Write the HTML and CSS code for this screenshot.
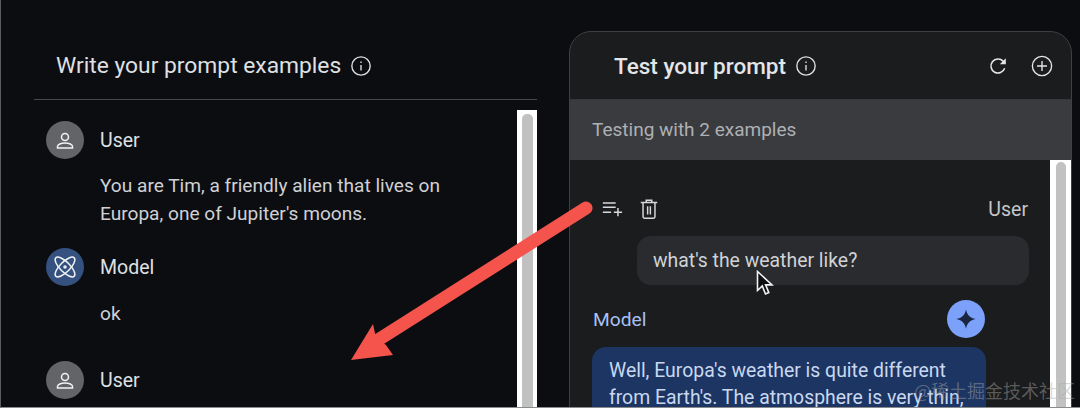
FILE: index.html
```html
<!DOCTYPE html>
<html lang="en">
<head>
  <meta charset="UTF-8">
  <meta name="viewport" content="width=device-width, initial-scale=1.0">
  <title>Prompt examples</title>
  <link rel="stylesheet" href="styles.css">
</head>
<body>
  <div class="screen">
    <!-- Left side: prompt examples -->
    <section class="examples">
      <header class="examples-header">
        <h2 class="examples-title">Write your prompt examples</h2>
        <svg class="icon-info" viewBox="0 0 24 24"><circle cx="12" cy="12" r="10"/><path d="M12 11v6M12 7v1.600"/></svg>
      </header>
      <div class="examples-body">
        <div class="messages">
          <div class="message">
            <div class="message-head">
              <span class="avatar avatar-user">
                <svg viewBox="0 0 24 24"><circle cx="12" cy="9" r="3.500"/><path d="M4.500 20v-1.500c0-2 3.500-3.500 7.500-3.500s7.500 1.500 7.500 3.500V20z"/></svg>
              </span>
              <span class="message-role">User</span>
            </div>
            <p class="message-text">You are Tim, a friendly alien that lives on<br>Europa, one of Jupiter's moons.</p>
          </div>
          <div class="message message-short">
            <div class="message-head">
              <span class="avatar avatar-model">
                <svg viewBox="0 0 24 24"><ellipse cx="12" cy="12" rx="13" ry="5" transform="rotate(45 12 12)"/><ellipse cx="12" cy="12" rx="13" ry="5" transform="rotate(-45 12 12)"/><circle cx="12" cy="12" r="1"/></svg>
              </span>
              <span class="message-role">Model</span>
            </div>
            <p class="message-text">ok</p>
          </div>
          <div class="message">
            <div class="message-head">
              <span class="avatar avatar-user">
                <svg viewBox="0 0 24 24"><circle cx="12" cy="9" r="3.500"/><path d="M4.500 20v-1.500c0-2 3.500-3.500 7.500-3.500s7.500 1.500 7.500 3.500V20z"/></svg>
              </span>
              <span class="message-role">User</span>
            </div>
          </div>
        </div>
        <div class="scrollbar"><div class="scrollbar-thumb"></div></div>
      </div>
    </section>

    <!-- Right side: test panel -->
    <section class="test-panel">
      <header class="test-header">
        <h2 class="test-title">Test your prompt</h2>
        <svg class="icon-info" viewBox="0 0 24 24"><circle cx="12" cy="12" r="10"/><path d="M12 11v6M12 7v1.600"/></svg>
        <div class="test-actions">
          <svg class="icon-refresh" viewBox="0 0 24 24"><path class="refresh-arc" d="M19.300 14.500a7.700 7.700 0 1 1-1.700-7.800L19.500 8.500"/><path class="refresh-tip" d="M20.500 3.500v6.500h-6.500z"/></svg>
          <svg class="icon-add" viewBox="0 0 24 24"><circle cx="12" cy="12" r="10.500"/><path d="M12 6.500v11M6.500 12h11"/></svg>
        </div>
      </header>
      <div class="test-status">Testing with 2 examples</div>
      <div class="test-body">
        <div class="test-chat">
          <div class="user-row">
            <svg class="icon-queue" viewBox="0 0 24 24"><path d="M2 5.500h14M2 10h14M2 15.500h9M14 15.500h9M18.500 11v9"/></svg>
            <svg class="icon-trash" viewBox="0 0 24 24"><path d="M3 5h18M9 5V2.500h6V5M5.500 5v15.500a1.500 1.500 0 0 0 1.500 1.500h10a1.500 1.500 0 0 0 1.500-1.500V5M10.500 9v9M13.500 9v9"/></svg>
            <span class="user-label">User</span>
          </div>
          <div class="user-bubble">what's the weather like?</div>
          <div class="model-row">
            <span class="model-label">Model</span>
            <span class="model-badge">
              <svg viewBox="0 0 24 24"><path d="M12 1.500c1.200 6 4.500 9.300 10.500 10.500-6 1.200-9.300 4.500-10.500 10.500-1.200-6-4.500-9.300-10.500-10.500 6-1.200 9.300-4.500 10.500-10.500z"/></svg>
            </span>
          </div>
          <div class="model-bubble">Well, Europa's weather is quite different from Earth's. The atmosphere is very thin,</div>
        </div>
        <div class="scrollbar scrollbar-test"><div class="scrollbar-thumb"></div></div>
      </div>
    </section>

    <!-- Annotation on top of the screenshot -->
    <svg class="arrow" viewBox="0 0 1080 408">
      <path class="arrow-shaft" d="M586 208L378 340"/>
      <path class="arrow-head" d="M351 360L373 324L376 338L386 345L393 355z"/>
    </svg>
    <svg class="cursor" viewBox="0 0 18 26"><path d="M1.500 1.500v19l4.800-4.500 3.200 8 3.300-1.400-3.200-7.700h6.400z"/></svg>
    <div class="watermark">@稀土掘金技术社区</div>
  </div>
</body>
</html>
```
FILE: styles.css
```css
/* Global Styles */
* {
  margin: 0;
  padding: 0;
  box-sizing: border-box;
}

body {
  font-family: Roboto, Arial, sans-serif;
  background-color: #0c0d11;
  color: #d8dade;
  overflow: hidden;
}

svg {
  display: block;
}

.screen {
  position: relative;
  display: flex;
  width: 1080px;
  height: 408px;
  overflow: hidden;
  border-left: 1px solid #5a5b5f;
  border-bottom: 1px solid #8a8b8e;
}

/* Left side */
.examples {
  width: 568px;
  flex-shrink: 0;
  padding: 0 32px 0 33px;
}

.examples-header {
  display: flex;
  align-items: center;
  gap: 9px;
  height: 100px;
  padding: 32px 0 0 22px;
  border-bottom: 1px solid #47484c;
}

.examples-title {
  font-size: 22.8px;
  font-weight: 400;
  color: #dfe0e3;
}

.icon-info {
  width: 22px;
  height: 22px;
  fill: none;
  stroke: #dfe0e3;
  stroke-width: 1.5;
}

.examples-body {
  display: flex;
  height: 298px;
  margin-top: 10px;
}

.messages {
  flex: 1;
  padding: 11px 0 0 12px;
}

.message {
  padding-bottom: 20px;
}

.message-short {
  padding-bottom: 33px;
}

.message-short .message-text {
  margin-top: 14px;
}

.message-head {
  display: flex;
  align-items: center;
  gap: 16px;
}

.avatar {
  display: flex;
  align-items: center;
  justify-content: center;
  width: 38px;
  height: 38px;
  border-radius: 50%;
}

.avatar svg {
  width: 24px;
  height: 24px;
  fill: none;
  stroke: #f1f2f4;
  stroke-width: 1.5;
}

.avatar-user {
  background-color: #636467;
}

.avatar-model {
  background-color: #34517f;
}

.message-role {
  font-size: 19.5px;
  color: #dfe0e3;
}

.message-text {
  margin: 13px 0 0 54px;
  font-size: 19.1px;
  line-height: 28px;
  color: #cfd1d5;
}

.scrollbar {
  width: 20px;
  flex-shrink: 0;
  padding: 4px 4px 0 5px;
  background-color: #fff;
}

.scrollbar-thumb {
  height: 100%;
  background-color: #c1c1c1;
  border-radius: 5px 5px 0 0;
}

/* Right side */
.test-panel {
  width: 503px;
  height: 420px;
  flex-shrink: 0;
  margin-top: 31px;
  background-color: #1b1c1e;
  border: 1px solid #3f4044;
  border-radius: 22px 22px 0 0;
  overflow: hidden;
}

.test-header {
  display: flex;
  align-items: center;
  gap: 9px;
  height: 68px;
  padding: 1px 18px 0 44px;
  border-bottom: 1px solid #36373a;
}

.test-title {
  font-size: 22.5px;
  font-weight: 500;
  color: #e4e5e8;
}

.test-actions {
  display: flex;
  align-items: center;
  gap: 22px;
  margin-left: auto;
}

.icon-refresh {
  width: 22px;
  height: 22px;
  fill: none;
}

.refresh-arc {
  stroke: #e4e5e8;
  stroke-width: 1.7;
}

.refresh-tip {
  fill: #e4e5e8;
}

.icon-add {
  width: 22px;
  height: 22px;
  fill: none;
  stroke: #e4e5e8;
  stroke-width: 1.5;
}

.test-status {
  display: flex;
  align-items: center;
  height: 60px;
  padding: 0 0 2px 22px;
  font-size: 19px;
  color: #aeb0b4;
  background-color: #3a3b3f;
}

.test-body {
  display: flex;
  height: 300px;
}

.test-chat {
  flex: 1;
  padding: 36px 22px 0 22px;
}

.user-row {
  display: flex;
  align-items: center;
  gap: 15px;
  height: 26px;
  padding-left: 9px;
}

.icon-queue {
  width: 22px;
  height: 22px;
  fill: none;
  stroke: #d8d9dc;
  stroke-width: 1.6;
}

.icon-trash {
  width: 22px;
  height: 22px;
  fill: none;
  stroke: #d8d9dc;
  stroke-width: 1.6;
}

.user-label {
  margin-left: auto;
  font-size: 19.5px;
  color: #c5c7cb;
}

.user-bubble {
  display: flex;
  align-items: center;
  height: 49px;
  margin: 14px -1px 0 45px;
  padding-left: 16px;
  font-size: 19.4px;
  color: #d0d2d6;
  background-color: #292b2e;
  border-radius: 14px;
}

.model-row {
  display: flex;
  align-items: center;
  justify-content: space-between;
  height: 38px;
  margin: 15px 43px 0 0;
  padding-left: 1px;
}

.model-label {
  font-size: 19.2px;
  color: #a8c0f5;
}

.model-badge {
  display: flex;
  align-items: center;
  justify-content: center;
  width: 38px;
  height: 38px;
  background-color: #7ba1fb;
  border-radius: 50%;
}

.model-badge svg {
  width: 22px;
  height: 22px;
  fill: #1b2540;
}

.model-bubble {
  width: 394px;
  margin-top: 9px;
  padding: 10px 17px 14px;
  font-size: 19.4px;
  line-height: 27px;
  color: #c9d8f0;
  background-color: #1c3563;
  border-radius: 14px 14px 0 0;
}

.scrollbar-test {
  width: 21px;
  padding: 2px 5px 0 6px;
}

/* Overlays */
.arrow {
  position: absolute;
  left: -1px;
  top: 0;
  width: 1080px;
  height: 408px;
}

.arrow-shaft {
  fill: none;
  stroke: #f4544c;
  stroke-width: 13;
  stroke-linecap: round;
}

.arrow-head {
  fill: #f4544c;
}

.cursor {
  position: absolute;
  left: 755px;
  top: 270px;
  width: 18px;
  height: 26px;
  fill: #0d0e10;
  stroke: #f2f2f2;
  stroke-width: 1.6;
}

.watermark {
  position: absolute;
  left: 913px;
  top: 378px;
  font-family: "Noto Sans CJK SC", sans-serif;
  font-size: 18px;
  line-height: 24px;
  white-space: nowrap;
  color: rgba(170, 170, 170, 0.45);
}
```
